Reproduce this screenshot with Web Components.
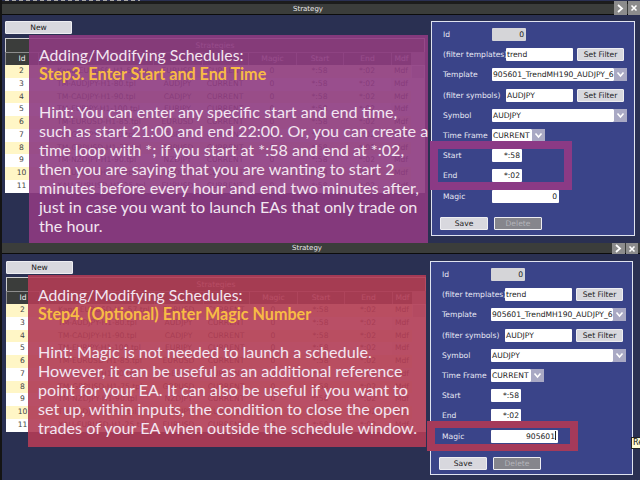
<!DOCTYPE html>
<html lang="en">
<head>
  <meta charset="UTF-8">
  <title>Strategy schedules</title>
  <style>
    html, body { margin: 0; padding: 0; background: #2a3052; }
    body { width: 640px; height: 480px; overflow: hidden; font-family: "DejaVu Sans", sans-serif; }
  </style>
</head>
<body>
  <strategy-window id="w1" style="height:243px; --bar-top:3px; --bar-h:10px; --strip:1px; --pad-top:6px; --pad-left:3px; --pad-right:5px; --table-gap:4px; --btn-right:0px; --form-w:204px; --form-h:215px; --specks:repeating-linear-gradient(90deg,#a9a9a9 0 4px,transparent 4px 7px) 3px 0/135px 1px no-repeat;">
    <schedule-form slot="form" magic="0" id-value="0"></schedule-form>
    <hint-card style="left:27px; top:35px; width:399px; height:208px; --tint:rgba(142,59,129,.9);">
      <span slot="title">Adding/Modifying Schedules:</span>
      <span slot="step">Step3. Enter Start and End Time</span>
      Hint: You can enter any specific start and end time,<br>
      such as start 21:00 and end 22:00. Or, you can create a<br>
      time loop with *; if you start at *:58 and end at *:02,<br>
      then you are saying that you are wanting to start 2<br>
      minutes before every hour and end two minutes after,<br>
      just in case you want to launch EAs that only trade on<br>
      the hour.
    </hint-card>
    <mark-box style="left:428px; top:141px; width:126px; height:33px; --mark:#8b3a85; --mark-w:8px;"></mark-box>
  </strategy-window>

  <strategy-window id="w2" style="height:237px; --bar-top:0px; --bar-h:10px; --strip:0px; --pad-top:7px; --pad-left:4px; --pad-right:7px; --table-gap:3px; --btn-right:2px; --form-w:203px; --form-h:214px;">
    <schedule-form slot="form" magic="905601" caret id-value="0"></schedule-form>
    <hint-card style="left:26px; top:32px; width:398px; height:172px; --tint:rgba(177,60,85,.9);">
      <span slot="title">Adding/Modifying Schedules:</span>
      <span slot="step">Step4. (Optional) Enter Magic Number</span>
      Hint: Magic is not needed to launch a schedule.<br>
      However, it can be useful as an additional reference<br>
      point for your EA. It can also be useful if you want to<br>
      set up, within inputs, the condition to close the open<br>
      trades of your EA when outside the schedule window.
    </hint-card>
    <mark-box style="left:425px; top:178px; width:135px; height:16px; --mark:#a53a5a; --mark-w:7px 8px;"></mark-box>
    <tip-label style="left:629px; top:194px;">Re</tip-label>
  </strategy-window>

  <script>
    const ROWS = [
      [2, 'Kapa-EURUSD-H1-57.tpl', 'EURUSD'],
      [3, 'TM-AUDJPY-H1-80.tpl', 'AUDJPY'],
      [4, 'TM-CADJPY-H1-90.tpl', 'CADJPY'],
      [5, 'TM-EURJPY-H1-100.tpl', 'EURJPY'],
      [6, 'TM-EURUSD-H1-85.tpl', 'EURUSD'],
      [7, 'TM-GBPJPY-H1-90.tpl', 'GBPJPY'],
      [8, 'TM-GBPUSD-H1-75.tpl', 'GBPUSD'],
      [9, 'TM-NZDJPY-H1-90.tpl', 'NZDJPY'],
      [10, 'TM-USDJPY-H1-90.tpl', 'USDJPY'],
      [11, 'XAU-EURUSD-H1-25.tpl', 'EURUSD']
    ];
    const CHEVRON = '<svg width="9" height="7" viewBox="0 0 9 7"><path d="M1.5 1.5 4.5 5 7.5 1.5" fill="none" stroke="#fff" stroke-width="1.6"/></svg>';

    // window: title bar, New button, table on the left and form on the right
    class StrategyWindow extends HTMLElement {
      constructor() {
        super();
        this.attachShadow({ mode: 'open' }).innerHTML = `
          <style>
            :host { display: block; position: relative; width: 640px; box-sizing: border-box;
              background: var(--specks, none), #2a3052; border-left: 2px solid #141414; overflow: hidden; }
            .bar { display: flex; margin-top: var(--strip); border-top: var(--bar-top) solid #1c1c1c; padding-right: var(--btn-right);
              border-bottom: 1px solid #0c0c0c; height: var(--bar-h); background: #3b3d3b; color: #e8e8e8; font-size: 7px; line-height: 10px; }
            .title { flex: 1; text-align: center; }
            .btns { display: flex; gap: 1px; margin-top: calc(0px - var(--bar-top)); height: calc(var(--bar-h) + var(--bar-top) + 1px); }
            .btns span { width: 12.5px; display: flex; align-items: center; justify-content: center; background: #8c8c8c; }
            .main { display: flex; justify-content: space-between; padding: var(--pad-top) var(--pad-right) 0 var(--pad-left); }
            .left { display: flex; flex-direction: column; gap: var(--table-gap); }
          </style>
          <div class="bar">
            <div class="title">Strategy</div>
            <div class="btns">
              <span><svg width="8" height="9" viewBox="0 0 8 9"><path d="M2 1 6 4.5 2 8" fill="none" stroke="#fff" stroke-width="1.8"/></svg></span>
              <span><svg width="8" height="8" viewBox="0 0 8 8"><path d="M1.5 1.5 6.500 6.500M6.500 1.500 1.500 6.500" fill="none" stroke="#fff" stroke-width="1.6"/></svg></span>
            </div>
          </div>
          <div class="main">
            <div class="left">
              <ui-button style="width:67px;">New</ui-button>
              <schedule-table></schedule-table>
            </div>
            <slot name="form"></slot>
          </div>
          <slot></slot>`;
      }
    }

    class UiButton extends HTMLElement {
      constructor() {
        super();
        this.attachShadow({ mode: 'open' }).innerHTML = `
          <style>
            :host { display: block; height: 13px; box-sizing: border-box; background: var(--btn, #d8d8de); color: var(--ink, #222);
              border: 1px solid #eeeef2; border-radius: 1px; font-size: 7.6px; line-height: 11px; text-align: center; }
          </style>
          <slot></slot>`;
      }
    }

    class ScheduleTable extends HTMLElement {
      constructor() {
        super();
        const cols = ['Id', '', '', '', 'Magic', 'Start', 'End', 'Mdf'];
        const head = cols.map(c => `<div class="h">${c}</div>`).join('');
        const body = ROWS.map((r, i) => `
          <div class="row ${i % 2 ? '' : 'alt'}">
            <div>${r[0]}</div><div class="tpl">${r[1]}</div><div>${r[2]}</div><div>CURRENT</div>
            <div>0</div><div>*:58</div><div>*:02</div><div class="mdf">Mdf</div>
          </div>`).join('');
        this.attachShadow({ mode: 'open' }).innerHTML = `
          <style>
            :host { display: block; width: 420px; font-size: 7.6px; }
            .cap { height: 13px; background: #3b3d3b; border: 1px solid #d0d0d0; border-bottom: 0; text-align: center;
              color: #ddd; line-height: 13px; box-sizing: content-box; width: 418px; }
            .grid { display: grid; grid-template-columns: 33px 115px 49px 46px 48px 47px 48px 20px 14px; }
            .head, .row { display: contents; }
            .h { height: 13px; line-height: 12px; background: #3b3d3b; color: #eee; text-align: center;
              border-left: 1px solid #8d8d8d; border-top: 1px solid #8d8d8d; box-sizing: border-box; }
            .row > div { height: 12.75px; line-height: 12.75px; text-align: center; color: #444; background: #fff; white-space: nowrap; overflow: hidden; }
            .row.alt > div { background: #fff6c6; }
            .row .tpl { text-align: left; padding-left: 19px; }
            .row .mdf { background: #eee; }
            .track { grid-column: 9; grid-row: 1 / span 11; background: #f3f3f3; position: relative; }
            .track i { position: absolute; left: 1px; right: 1px; top: 14px; height: 12px; background: #ccc; }
            .track b { display: block; height: 13px; background: #999; }
          </style>
          <div class="cap">Strategies</div>
          <div class="grid">
            <div class="head">${head}</div>
            ${body}
            <div class="track"><b></b><i></i></div>
          </div>`;
      }
    }

    // right hand form, only Magic and caret differ between the two windows
    class ScheduleForm extends HTMLElement {
      constructor() {
        super();
        const magic = this.getAttribute('magic');
        const caret = this.hasAttribute('caret') ? '<span class="caret"></span>' : '';
        const filter = (label, val) => `
          <div class="r"><label class="wide">${label}</label><div class="in" style="width:67px">${val}</div>
          <ui-button style="width:47px;margin-left:4px">Set Filter</ui-button></div>`;
        const select = (label, val, w) => `
          <div class="r"><label>${label}</label><div class="in" style="width:${w}px">${val}</div><div class="arrow">${CHEVRON}</div></div>`;
        const input = (label, val, w, extra) => `
          <div class="r"><label>${label}</label><div class="in num ${extra || ''}" style="width:${w}px">${val}</div></div>`;
        this.attachShadow({ mode: 'open' }).innerHTML = `
          <style>
            :host { display: block; width: var(--form-w); height: var(--form-h); box-sizing: border-box; background: #3a4489; border: 1px solid #dfe3f0;
              padding: 6px 0 0 11px; font-size: 7.6px; color: #e6e8f4; }
            .rows { display: grid; row-gap: 7.2px; }
            .r { display: flex; height: 13px; align-items: center; }
            label { width: 49px; flex: none; white-space: nowrap; }
            label.wide { width: 63px; }
            .in { height: 13px; box-sizing: border-box; background: #fff; color: #222; border-radius: 1px; padding: 0 1px; line-height: 13px;
              white-space: nowrap; overflow: hidden; }
            .num { text-align: right; padding-right: 2px; }
            .gray { background: #d5d5d8; }
            .arrow { width: 13px; height: 13px; display: flex; align-items: center; justify-content: center; background: #a9a9c4; }
            .caret { display: inline-block; width: 1px; height: 9px; background: #222; vertical-align: -1px; }
            .acts { display: flex; gap: 6px; margin: 14px 0 0 -3px; }
          </style>
          <div class="rows">
            ${input('Id', this.getAttribute('id-value'), 34, 'gray')}
            ${filter('(filter templates)', 'trend')}
            ${select('Template', '905601_TrendMH190_AUDJPY_6', 122)}
            ${filter('(filter symbols)', 'AUDJPY')}
            ${select('Symbol', 'AUDJPY', 122)}
            ${select('Time Frame', 'CURRENT', 40)}
            ${input('Start', '*:58', 30)}
            ${input('End', '*:02', 30)}
            ${input('Magic', magic + caret, 67)}
          </div>
          <div class="acts">
            <ui-button style="width:48px">Save</ui-button>
            <ui-button style="width:48px;--btn:#85858c;--ink:#b4b4ba">Delete</ui-button>
          </div>`;
      }
    }

    // translucent caption laid over the window
    class HintCard extends HTMLElement {
      constructor() {
        super();
        this.attachShadow({ mode: 'open' }).innerHTML = `
          <style>
            :host { display: block; position: absolute; box-sizing: border-box; background: var(--tint); padding: 10px 10px 0 10px;
              font-family: Lato, "Open Sans", sans-serif; font-size: 16.15px; line-height: 19px; color: #f3e6f1; white-space: nowrap; }
            ::slotted([slot=title]) { font-size: 15.8px; }
            .step { display: block; font-weight: bold; color: #f8bb45; margin-bottom: 19px; }
          </style>
          <slot name="title"></slot>
          <slot class="step" name="step"></slot>
          <slot></slot>`;
      }
    }

    class MarkBox extends HTMLElement {
      constructor() {
        super();
        this.attachShadow({ mode: 'open' }).innerHTML = `
          <style>
            :host { display: block; position: absolute; border: solid var(--mark); border-width: var(--mark-w); }
          </style>`;
      }
    }

    class TipLabel extends HTMLElement {
      constructor() {
        super();
        this.attachShadow({ mode: 'open' }).innerHTML = `
          <style>
            :host { display: block; position: absolute; height: 10px; width: 12px; background: #fffbd6; color: #111; border: 1px solid #222;
              font-size: 8px; line-height: 10px; padding-left: 1px; }
          </style>
          <slot></slot>`;
      }
    }

    customElements.define('ui-button', UiButton);
    customElements.define('schedule-table', ScheduleTable);
    customElements.define('schedule-form', ScheduleForm);
    customElements.define('hint-card', HintCard);
    customElements.define('mark-box', MarkBox);
    customElements.define('tip-label', TipLabel);
    customElements.define('strategy-window', StrategyWindow);
  </script>
</body>
</html>
